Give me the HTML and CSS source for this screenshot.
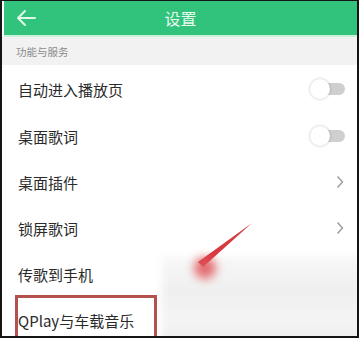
FILE: index.html
```html
<!DOCTYPE html>
<html lang="zh">
<head>
<meta charset="utf-8">
<link rel="stylesheet" href="styles.css">
</head>
<body>
<div class="frame">
  <header class="topbar">
    <svg class="back" width="22" height="18" viewBox="0 0 22 18"><path d="M20 9H3M10 2L3 9l7 7" fill="none" stroke="#dff8ea" stroke-width="2" stroke-linecap="round" stroke-linejoin="round"/></svg>
    <div class="title">设置</div>
  </header>
  <div class="section">功能与服务</div>
  <ul class="list">
    <li class="row"><span>自动进入播放页</span><span class="toggle"><span class="knob"></span></span></li>
    <li class="row"><span>桌面歌词</span><span class="toggle"><span class="knob"></span></span></li>
    <li class="row"><span>桌面插件</span><svg class="chev" width="8" height="14" viewBox="0 0 8 14"><path d="M1.5 1.5L6.5 7l-5 5.5" fill="none" stroke="#9a9a9a" stroke-width="1.4"/></svg></li>
    <li class="row"><span>锁屏歌词</span><svg class="chev" width="8" height="14" viewBox="0 0 8 14"><path d="M1.5 1.5L6.5 7l-5 5.5" fill="none" stroke="#9a9a9a" stroke-width="1.4"/></svg></li>
    <li class="row"><span>传歌到手机</span></li>
    <li class="row"><span class="q">QPlay与车载音乐</span></li>
  </ul>
  <div class="blur"></div>
  <div class="hilite"></div>
  <svg class="arrow" width="70" height="60" viewBox="0 0 70 60"><path d="M68 1 L14 40 L19 45 Z" fill="#d63a3f"/></svg>
  <div class="blob"></div>
</div>
</body>
</html>
```
FILE: styles.css
```css
html, body { margin: 0; padding: 0; background: #141414; }
body { width: 359px; height: 338px; overflow: hidden; }
.frame {
  position: relative;
  margin: 1px 2px 0 2px;
  width: 355px;
  height: 335px;
  background: #fff;
  overflow: hidden;
  font-family: "Noto Sans CJK SC", "Liberation Sans", sans-serif;
}
.topbar {
  height: 34px;
  margin-left: 2px;
  background: #31c27c;
  border-bottom: 2px solid #c9f1dc;
  display: flex;
  align-items: center;
  position: relative;
}
.back { margin-left: 11px; }
.title {
  position: absolute;
  left: 0; right: 0; top: 0; bottom: 0;
  display: flex; align-items: center; justify-content: center;
  color: #e9fbf1;
  font-size: 16px;
}
.section {
  height: 28px;
  background: #f2f2f2;
  color: #8a8a8a;
  font-size: 10.5px;
  display: flex; align-items: center;
  padding-left: 14px;
}
.list { list-style: none; margin: 0; padding: 0; }
.row {
  height: 46px;
  display: flex;
  align-items: center;
  justify-content: space-between;
  padding: 0 12px 0 16px;
  color: #2a2a2a;
  font-size: 15px;
}
.row:first-child { height: 48px; }
.toggle {
  position: relative;
  width: 26px; height: 12px;
  background: #cfcfcf;
  border-radius: 6px;
  margin-right: 0;
}
.knob {
  position: absolute;
  left: -9px; top: -4px;
  width: 20px; height: 20px;
  border-radius: 50%;
  background: #fff;
  box-shadow: 0 0 3px rgba(0,0,0,0.25);
}
.chev { margin-right: 1px; }
.blur {
  position: absolute;
  left: 160px; top: 256px;
  width: 200px; height: 90px;
  background: linear-gradient(180deg, #f7f7f7, #efefef 40%, #f4f4f4 70%, #ececec);
  filter: blur(4px);
}
.hilite {
  position: absolute;
  left: 13px; top: 294px;
  width: 136px; height: 60px;
  border: 3px solid #b4514f;
}
.arrow { position: absolute; left: 182px; top: 221px; }
.blob {
  position: absolute;
  left: 192px; top: 256px;
  width: 22px; height: 22px;
  border-radius: 50%;
  background: #e0565a;
  filter: blur(5px);
  opacity: 0.85;
}
```
